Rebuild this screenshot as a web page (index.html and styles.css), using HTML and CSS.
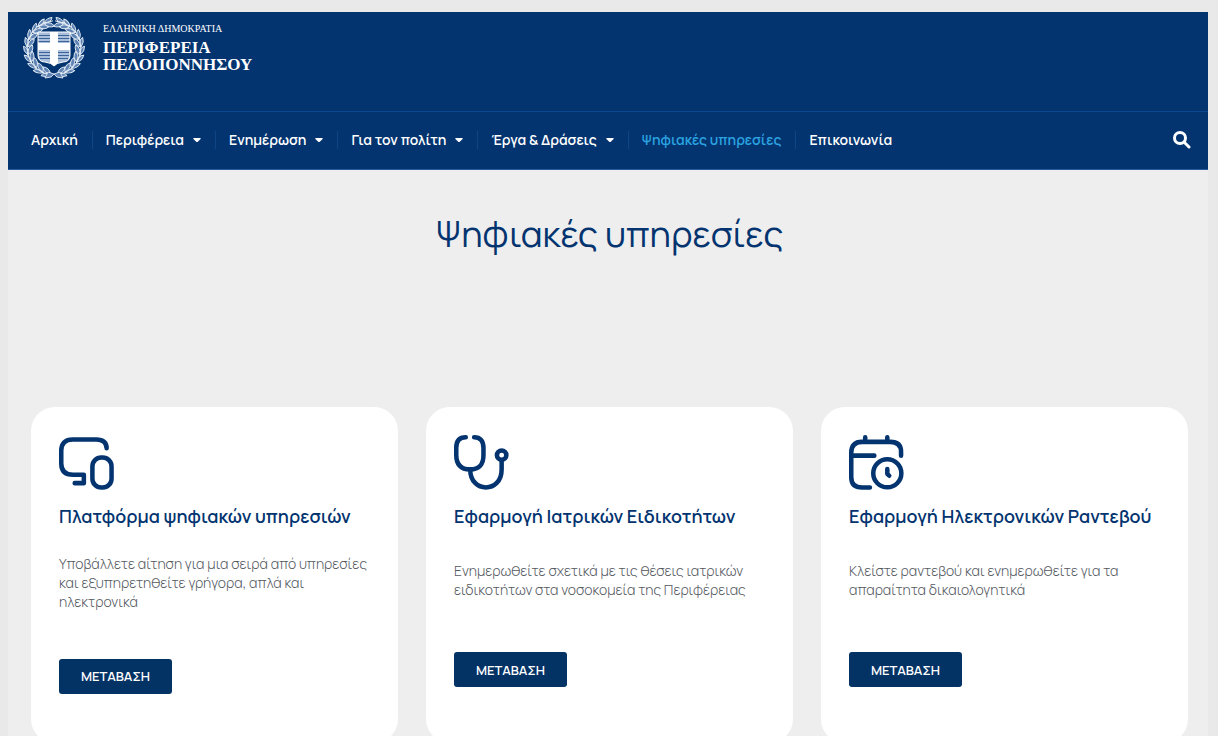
FILE: index.html
```html
<!DOCTYPE html>
<html lang="el">
<head>
    <meta charset="UTF-8">
    <meta name="viewport" content="width=device-width, initial-scale=1.0">
    <title>Ψηφιακές υπηρεσίες</title>
    <link rel="stylesheet" href="styles.css">
</head>
<body>
    <div class="page">
        <header class="header">
            <div class="header-top">
                <a href="#" class="logo">
                    <svg class="emblem" viewBox="0 0 62 62" aria-hidden="true">
                        <defs>
                            <g id="leaf">
                                <path d="M34 58q-4 4-9 3 2-5 9-3z"/>
                                <path d="M34 57q-3-6-9-5 2 6 9 5z"/>
                                <path d="M35 57.500h-10"/>
                            </g>
                            <g id="branch">
                                <use href="#leaf" transform="rotate(14 31 31)"/>
                                <use href="#leaf" transform="rotate(31 31 31)"/>
                                <use href="#leaf" transform="rotate(48 31 31)"/>
                                <use href="#leaf" transform="rotate(65 31 31)"/>
                                <use href="#leaf" transform="rotate(82 31 31)"/>
                                <use href="#leaf" transform="rotate(99 31 31)"/>
                                <use href="#leaf" transform="rotate(116 31 31)"/>
                                <use href="#leaf" transform="rotate(133 31 31)"/>
                                <use href="#leaf" transform="rotate(150 31 31)"/>
                                <use href="#leaf" transform="rotate(165 31 31)"/>
                            </g>
                        </defs>
                        <!-- wreath -->
                        <g fill="#5f84b4" stroke="#e4ecf6" stroke-width="0.9">
                            <use href="#branch"/>
                            <use href="#branch" transform="matrix(-1 0 0 1 62 0)"/>
                            <path d="M22 61l3-6 6 2 6-2 3 6-6-1-3-3-3 3z"/>
                        </g>
                        <!-- shield -->
                        <path d="M15 15h32v23q0 7-7 7-7 1-9 4-2-3-9-4-7 0-7-7z" fill="#a9bfdb"/>
                        <path d="M15 18.500h32M15 21.500h32M15 24.500h32M16 35.500h30M16 38.500h30M17 41.500h28" stroke="#3c6499"/>
                        <path d="M27 15h8v11h12v7H35v13l-4 3-4-3V33H15v-7h12z" fill="#fff"/>
                        <path d="M15 15h32v23q0 7-7 7-7 1-9 4-2-3-9-4-7 0-7-7z" fill="none" stroke="#fff"/>
                    </svg>
                    <span class="logo-text">
                        <span class="logo-small">ΕΛΛΗΝΙΚΗ ΔΗΜΟΚΡΑΤΙΑ</span>
                        <span class="logo-big">ΠΕΡΙΦΕΡΕΙΑ</span>
                        <span class="logo-big">ΠΕΛΟΠΟΝΝΗΣΟΥ</span>
                    </span>
                </a>
            </div>
            <nav class="nav">
                <ul class="menu">
                    <li><a href="#">Αρχική</a></li>
                    <li><a href="#">Περιφέρεια <svg class="caret" viewBox="0 0 10 6"><path d="M1 0h8q1 0 .5 1L6 4.500q-1 1-2 0L.5 1Q0 0 1 0z"/></svg></a></li>
                    <li><a href="#">Ενημέρωση <svg class="caret" viewBox="0 0 10 6"><path d="M1 0h8q1 0 .5 1L6 4.500q-1 1-2 0L.5 1Q0 0 1 0z"/></svg></a></li>
                    <li><a href="#">Για τον πολίτη <svg class="caret" viewBox="0 0 10 6"><path d="M1 0h8q1 0 .5 1L6 4.500q-1 1-2 0L.5 1Q0 0 1 0z"/></svg></a></li>
                    <li><a href="#">Έργα &amp; Δράσεις <svg class="caret" viewBox="0 0 10 6"><path d="M1 0h8q1 0 .5 1L6 4.500q-1 1-2 0L.5 1Q0 0 1 0z"/></svg></a></li>
                    <li><a href="#" class="active">Ψηφιακές υπηρεσίες</a></li>
                    <li><a href="#">Επικοινωνία</a></li>
                </ul>
                <button type="button" class="search" aria-label="Αναζήτηση">
                    <svg viewBox="0 0 18 18"><circle cx="7" cy="7" r="5.500"/><path d="M11 11l5 5"/></svg>
                </button>
            </nav>
        </header>

        <main class="main">
            <h1>Ψηφιακές υπηρεσίες</h1>
            <div class="cards">
                <section class="card">
                    <div class="card-head">
                        <svg class="icon" viewBox="0 0 56 56">
                            <path d="M48.500 13.500Q48.500 4.500 38 4.500H14Q2.300 4.500 2.300 16v13q0 11.500 12 11.500h11v8.500H16"/>
                            <rect x="34" y="23" width="19.500" height="30.500" rx="9"/>
                        </svg>
                        <h2>Πλατφόρμα ψηφιακών υπηρεσιών</h2>
                    </div>
                    <p>Υποβάλλετε αίτηση για μια σειρά από υπηρεσίες και εξυπηρετηθείτε γρήγορα, απλά και ηλεκτρονικά</p>
                    <button type="button" class="btn">ΜΕΤΑΒΑΣΗ</button>
                </section>
                <section class="card">
                    <div class="card-head">
                        <svg class="icon" viewBox="0 0 56 56">
                            <path d="M12 2.300Q2.300 2.300 2.300 13v7q0 15 14 15T30 20v-7Q30 2.300 20.500 2.300"/>
                            <path d="M16.500 35c0 24.500 32 24.500 32 0v-9"/>
                            <circle cx="48.500" cy="20.500" r="4.800"/>
                        </svg>
                        <h2>Εφαρμογή Ιατρικών Ειδικοτήτων</h2>
                    </div>
                    <p>Ενημερωθείτε σχετικά με τις θέσεις ιατρικών ειδικοτήτων στα νοσοκομεία της Περιφέρειας</p>
                    <button type="button" class="btn">ΜΕΤΑΒΑΣΗ</button>
                </section>
                <section class="card">
                    <div class="card-head">
                        <svg class="icon" viewBox="0 0 56 56">
                            <path d="M53 21v-4Q53 7 42 7H13Q2.300 7 2.300 18v25q0 10.500 11 10.500h8M2.300 21h23.500M16.500 2.300V7M39 2.300V7"/>
                            <circle cx="39" cy="39" r="14.300"/>
                            <path d="M39 34.500v5l2 2"/>
                        </svg>
                        <h2>Εφαρμογή Ηλεκτρονικών Ραντεβού</h2>
                    </div>
                    <p>Κλείστε ραντεβού και ενημερωθείτε για τα απαραίτητα δικαιολογητικά</p>
                    <button type="button" class="btn">ΜΕΤΑΒΑΣΗ</button>
                </section>
            </div>
        </main>
    </div>
</body>
</html>
```
FILE: styles.css
```css
* {
    box-sizing: border-box;
}
body {
    margin: 0;
    padding: 12px 10px 0 8px;
    background: #e9e9e9;
    font-family: Manrope, Inter, sans-serif;
}
a {
    color: inherit;
    text-decoration: none;
}
.page {
    background: #eee;
}

/* header */
.header {
    background: #033470;
    color: #fff;
    border-bottom: 1px solid #2a5a9c;
}
.header-top {
    padding: 5px 15px 32px;
    border-bottom: 1px solid #0d4790;
}
.logo {
    display: inline-flex;
    gap: 18px;
    vertical-align: top;
}
.emblem {
    width: 62px;
    height: 62px;
}
.logo-text {
    display: flex;
    flex-direction: column;
    padding-top: 5px;
    font-family: "Liberation Serif", serif;
}
.logo-small {
    font-size: 10px;
    line-height: 14px;
    margin-bottom: 3px;
}
.logo-big {
    font-size: 17px;
    line-height: 17px;
    font-weight: 700;
}
.nav {
    display: flex;
    align-items: center;
    justify-content: space-between;
    height: 57px;
    padding: 0 17px 2px 10px;
}
.menu {
    display: flex;
    margin: 0;
    padding: 0;
    list-style: none;
}
.menu li {
    display: flex;
    align-items: center;
    height: 18px;
    padding: 0 14px 0 13px;
}
.menu li + li {
    border-left: 1px solid #0d4585;
}
.menu a {
    display: flex;
    align-items: center;
    gap: 9px;
    font-size: 14px;
    font-weight: 600;
    white-space: nowrap;
}
.menu .active {
    color: #2ba3e0;
}
.caret {
    width: 8px;
    height: 5px;
    margin-top: 2px;
    fill: #fff;
}
.search {
    display: flex;
    padding: 0;
    border: none;
    background: none;
    cursor: pointer;
}
.search svg {
    width: 18px;
    height: 18px;
    fill: none;
    stroke: #fff;
    stroke-width: 3;
    stroke-linecap: round;
}

/* content */
.main {
    padding: 39px 20px 40px 23px;
}
h1 {
    margin: 0 0 148px;
    color: #033470;
    font-size: 36px;
    line-height: 50px;
    font-weight: 400;
    text-align: center;
}
.cards {
    display: grid;
    grid-template-columns: repeat(3, 1fr);
    gap: 28px;
}
.card {
    display: flex;
    flex-direction: column;
    align-items: flex-start;
    justify-content: space-between;
    min-height: 336px;
    padding: 28px;
    border-radius: 24px;
    background: #fff;
}
.card::after {
    content: "";
}
.icon {
    display: block;
    width: 55px;
    height: 55px;
    fill: none;
    stroke: #033470;
    stroke-width: 4.6;
    stroke-linecap: round;
    stroke-linejoin: round;
}
.card h2 {
    margin: 14px 0 5px;
    color: #033470;
    font-size: 18px;
    line-height: 24px;
    font-weight: 600;
    white-space: nowrap;
}
.card p {
    margin: 0 0 26px;
    color: #54595f;
    font-size: 14px;
    line-height: 19px;
    font-weight: 300;
}
.btn {
    height: 35px;
    padding: 0 22px;
    border: none;
    border-radius: 3px;
    background: #033265;
    color: #fff;
    font-family: inherit;
    font-size: 13px;
    font-weight: 600;
    cursor: pointer;
}
```
